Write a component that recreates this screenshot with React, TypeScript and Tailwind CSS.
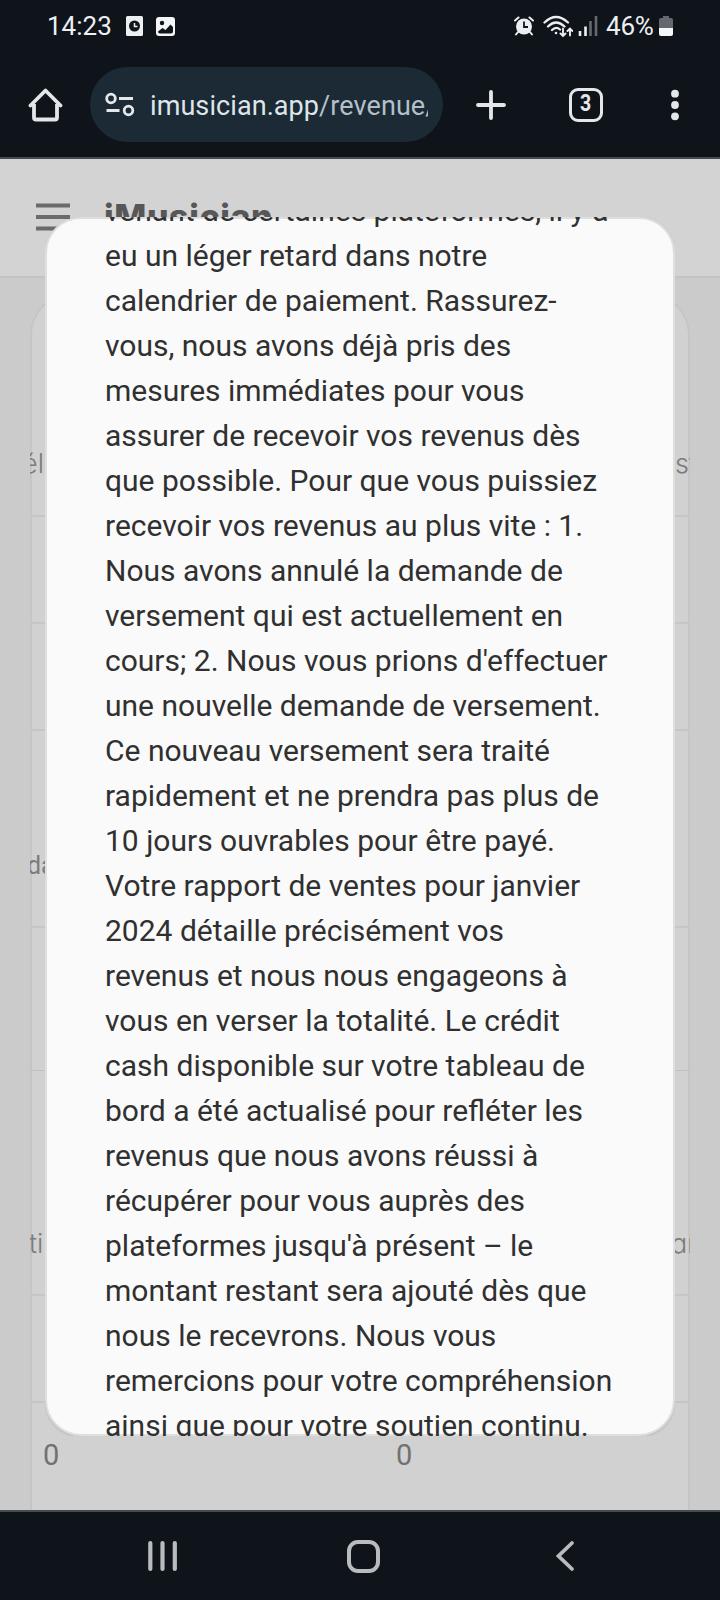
const lines = [
  'venant de certaines plateformes, il y a',
  'eu un léger retard dans notre',
  'calendrier de paiement. Rassurez-',
  'vous, nous avons déjà pris des',
  'mesures immédiates pour vous',
  'assurer de recevoir vos revenus dès',
  'que possible. Pour que vous puissiez',
  'recevoir vos revenus au plus vite : 1.',
  'Nous avons annulé la demande de',
  'versement qui est actuellement en',
  "cours; 2. Nous vous prions d'effectuer",
  'une nouvelle demande de versement.',
  'Ce nouveau versement sera traité',
  'rapidement et ne prendra pas plus de',
  '10 jours ouvrables pour être payé.',
  'Votre rapport de ventes pour janvier',
  '2024 détaille précisément vos',
  'revenus et nous nous engageons à',
  'vous en verser la totalité. Le crédit',
  'cash disponible sur votre tableau de',
  'bord a été actualisé pour refléter les',
  'revenus que nous avons réussi à',
  'récupérer pour vous auprès des',
  "plateformes jusqu'à présent – le",
  'montant restant sera ajouté dès que',
  'nous le recevrons. Nous vous',
  'remercions pour votre compréhension',
  'ainsi que pour votre soutien continu.',
];

function StatusBar() {
  return (
    <div className="flex h-[52px] items-center pr-[47px] pl-[47px] text-[26px] leading-none text-[#eceff1]">
      <span className="w-[64px] whitespace-nowrap">14:23</span>
      <svg className="ml-[15px] h-[20px] w-[17px]" viewBox="0 0 17 20">
        <rect width="17" height="20" rx="1.5" fill="#eceff1" />
        <circle cx="8.5" cy="10" r="5.5" fill="#10151c" />
        <path d="M8.5 7v3.5h3" fill="none" stroke="#eceff1" strokeWidth="1.5" />
      </svg>
      <svg className="ml-[13px] h-[19px] w-[19px]" viewBox="0 0 19 19">
        <rect width="19" height="19" rx="3" fill="#f4f6f7" />
        <circle cx="6" cy="6" r="2.2" fill="#10151c" />
        <path d="M2 14.500 6.500 11l3 2 5-5.500 2.500 2.500v4.500q0 2-2 2H4q-2 0-2-2z" fill="#10151c" />
      </svg>
      <svg className="ml-auto h-[20px] w-[20px]" viewBox="0 0 20 20" stroke="#eceff1" strokeLinecap="round" fill="none">
        <circle cx="10" cy="10.5" r="8" fill="#eceff1" stroke="none" />
        <path d="M1 4.500 4.500 1.500M19 4.500 15.500 1.500M4 16l-2 2.500M16 16l2 2.500" strokeWidth="2" />
        <path d="M10 5.500V11h4" stroke="#10151c" strokeWidth="1.8" strokeLinecap="butt" />
      </svg>
      <svg className="ml-[9px] h-[23px] w-[30px]" viewBox="0 0 30 23" fill="none" stroke="#eceff1" strokeWidth="2.3" strokeLinecap="round">
        <path d="M1.500 7.500Q13-3.500 25 7.500M5 11.500Q13 3.500 21.500 11.500M9 15Q13 11 17 14.500" />
        <circle cx="13" cy="18" r="1.3" fill="#eceff1" stroke="none" />
        <path d="M20 13.500v7.500M17.500 18.500l2.500 2.500 2.500-2.500M27 20.500V14M24.500 16l2.500-2.500 2.500 2.500" strokeWidth="1.9" />
      </svg>
      <svg className="ml-[5px] h-[20px] w-[20px]" viewBox="0 0 20 20" strokeWidth="2.6">
        <path d="M2 15v5M7.500 10.500V20" stroke="#eceff1" />
        <path d="M12.500 5v15M18 0v20" stroke="#65696d" />
      </svg>
      <span className="ml-[8px] w-[51px] whitespace-nowrap tracking-[-0.2px]">46%</span>
      <svg className="ml-[2px] h-[20px] w-[14px]" viewBox="0 0 14 20">
        <path d="M4 0h6v2h2q2 0 2 2v9H0V4q0-2 2-2h2z" fill="#65696d" />
        <path d="M0 12h14v6q0 2-2 2H2q-2 0-2-2z" fill="#f4f6f7" />
      </svg>
    </div>
  );
}

function BrowserBar() {
  return (
    <div className="flex h-[105px] items-center pl-[28px] text-[#e4e7ea]">
      <svg className="h-[36px] w-[35px]" viewBox="0 0 35 36" fill="none" stroke="currentColor" strokeWidth="3.8">
        <path d="M6 17v13.500q0 2 2 2h19q2 0 2-2V17" />
        <path d="M2.500 18.500 17.500 3.500 32.500 18.500" strokeLinecap="round" strokeLinejoin="round" />
      </svg>
      <div className="ml-[27px] flex h-[75px] w-[353px] items-center rounded-full bg-[#1b2a34] pl-[15px]">
        <svg className="h-[26px] w-[30px]" viewBox="0 0 30 26" fill="none" stroke="currentColor" strokeWidth="2.8">
          <circle cx="6" cy="6.5" r="4.3" />
          <path d="M14 6.500h14M1.500 18.500h13" />
          <circle cx="23.5" cy="18.5" r="4.3" />
        </svg>
        <div className="mt-[3px] ml-[15px] w-[278px] overflow-hidden text-[27px] tracking-[0.08px] whitespace-nowrap text-[#dfe6eb]">
          imusician.app<span className="text-[#b4c0c9]">/revenue/</span>
        </div>
      </div>
      <svg className="ml-[32px] h-[32px] w-[32px]" viewBox="0 0 32 32" stroke="currentColor" strokeWidth="3.8" strokeLinecap="round">
        <path d="M16 3v26M3 16h26" />
      </svg>
      <div className="ml-[62px] flex h-[34px] w-[34px] items-center justify-center rounded-[9px] border-[3px] border-current text-[23px] leading-none font-bold">
        <span className="-mt-[2px] scale-x-85">3</span>
      </div>
      <svg className="ml-[68px] h-[32px] w-[8px]" viewBox="0 0 8 32" fill="currentColor">
        <circle cx="4" cy="4.7" r="3.9" />
        <circle cx="4" cy="16" r="3.9" />
        <circle cx="4" cy="27.3" r="3.9" />
      </svg>
    </div>
  );
}

function Page() {
  return (
    <div className="h-[1351px] overflow-hidden bg-[#cbcbcb]">
      <header className="flex h-[119px] items-center border-b-2 border-[#c3c3c3] bg-[#d3d3d3] pb-[2px] pl-[36px]">
        <svg className="h-[28px] w-[34px]" viewBox="0 0 34 28" stroke="#6b6b6b" strokeWidth="4">
          <path d="M0 2.500h34M0 14h34M0 25.500h34" />
        </svg>
        <span className="ml-[34px] font-['Inter'] text-[34px] font-extrabold tracking-[0.6px] text-[#575757]">iMusician</span>
      </header>
      <div className="mx-[30px] mt-[16px] flex h-[1300px] flex-col overflow-hidden rounded-t-[40px] bg-[#d1d1d1] font-['Inter',sans-serif] text-[27px] leading-[40px] font-light whitespace-nowrap text-[#7c7c7c] shadow-[inset_0_0_0_2px_#c5c5c5] [font-feature-settings:'cv11']">
        <div className="flex h-[223px] items-end justify-between border-b-2 border-[#c6c6c6] pb-[31px]">
          <span className="-ml-[8px]">él</span>
          <span className="-mr-[7px]">st</span>
        </div>
        <div className="h-[107px] border-b-2 border-[#c6c6c6]" />
        <div className="h-[107px] border-b-2 border-[#c6c6c6]" />
        <div className="flex h-[197px] items-end border-b-2 border-[#c6c6c6] pb-[40px] font-['Roboto',sans-serif] text-[25px] font-normal">
          <span className="-ml-[3px]">da</span>
        </div>
        <div className="h-[143px] border-b border-[#c0c0c0]" />
        <div className="flex h-[225px] items-end justify-between border-b-2 border-[#c6c6c6] pb-[30px]">
          <span className="-ml-[1px]">ti</span>
          <span className="-mr-[7px]">ar</span>
        </div>
        <div className="h-[107px] border-b-2 border-[#c6c6c6]" />
        <div className="flex pt-[32px] pl-[13px] font-['Roboto',sans-serif] text-[29px] font-normal text-[#717171]">
          <span className="w-[353px]">0</span>
          <span>0</span>
        </div>
      </div>
    </div>
  );
}

function Message() {
  return (
    <div className="absolute top-[217px] left-[45px] h-[1219px] w-[630px] overflow-hidden">
      <div className="h-full rounded-[36px] border-2 border-[#dedede] bg-[#fafafa] pl-[58px] shadow-sm">
        <div className="-mt-[31px] text-[30px] leading-[45px] whitespace-nowrap text-[#303030]">
          {lines.map((line) => (
            <p key={line}>{line}</p>
          ))}
        </div>
      </div>
    </div>
  );
}

function NavBar() {
  return (
    <div className="flex h-[90px] items-center border-t-2 border-[#454b50] text-[#b9bcbe]">
      <svg className="ml-[148px] h-[32px] w-[30px]" viewBox="0 0 30 32" stroke="currentColor" strokeWidth="4.2" strokeLinecap="round">
        <path d="M2.300 3v26M14.500 3v26M26.800 3v26" />
      </svg>
      <div className="ml-[169px] h-[33px] w-[33px] rounded-[11px] border-4 border-current" />
      <svg className="ml-[175px] h-[32px] w-[20px]" viewBox="0 0 20 32" fill="none" stroke="currentColor" strokeWidth="3.8" strokeLinecap="round">
        <path d="M17 3 3.500 16 17 29" />
      </svg>
    </div>
  );
}

export default function App() {
  return (
    <div className="relative h-[1600px] w-[720px] overflow-hidden bg-[#0f141b] font-['Roboto',sans-serif]">
      <StatusBar />
      <BrowserBar />
      <div className="h-[2px] bg-[#454a4e]" />
      <Page />
      <NavBar />
      <Message />
    </div>
  );
}
